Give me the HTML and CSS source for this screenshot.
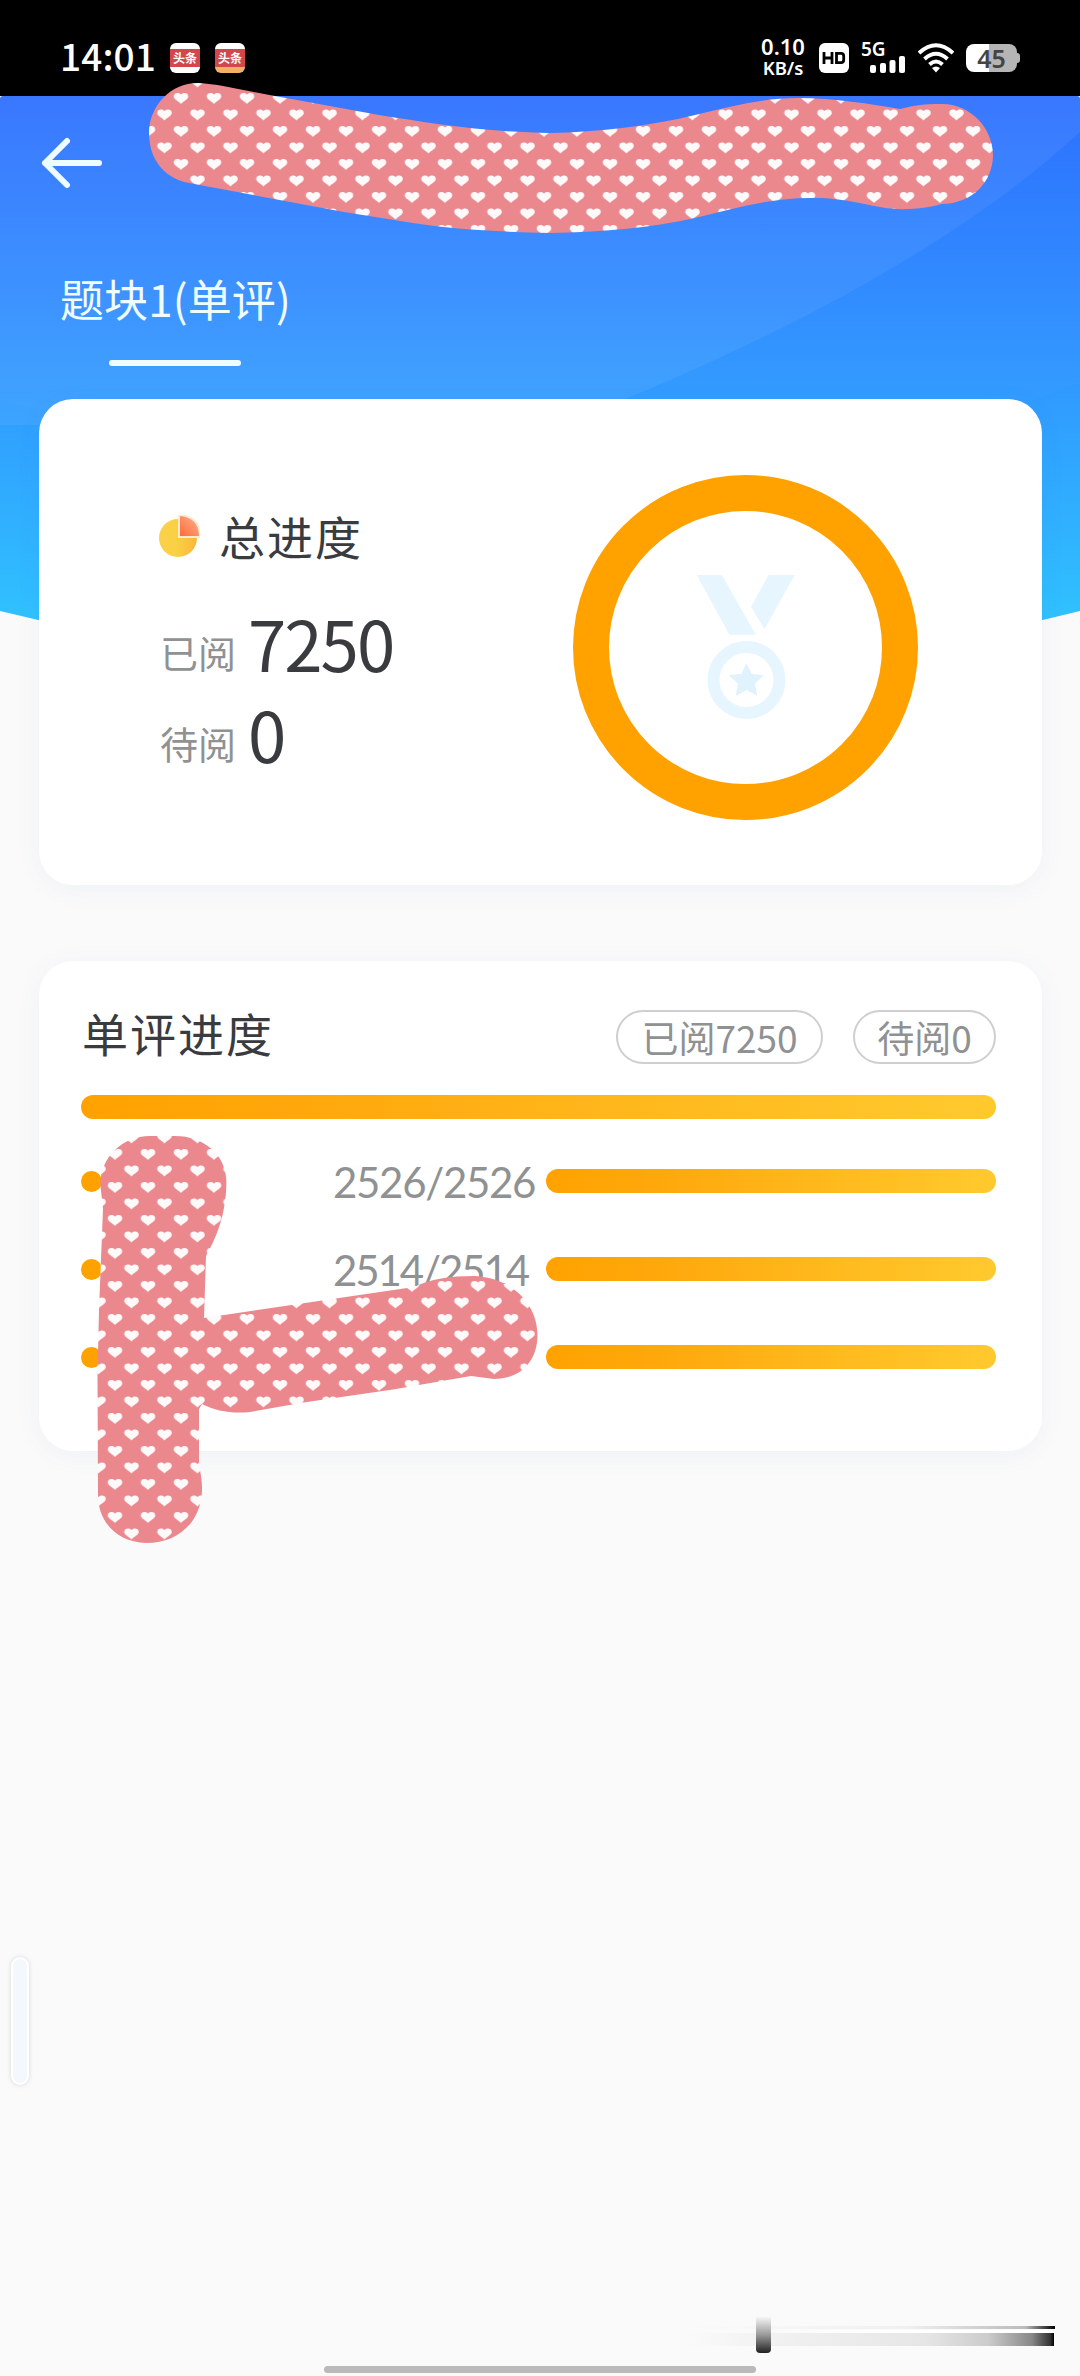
FILE: index.html
```html
<!DOCTYPE html>
<html lang="zh-CN">
<head>
<meta charset="utf-8">
<title>阅卷进度</title>
<link rel="stylesheet" href="styles.css">
</head>
<body>
<div class="page">
  <svg class="backdrop" width="1080" height="560" viewBox="0 96 1080 560" aria-hidden="true">
    <defs>
      <linearGradient id="sky" gradientUnits="userSpaceOnUse" x1="0" y1="96" x2="0" y2="640">
        <stop offset="0" stop-color="#2a6dff"/>
        <stop offset=".53" stop-color="#3099ff"/>
        <stop offset=".95" stop-color="#30c0ff"/>
      </linearGradient>
    </defs>
    <path d="M0 99Q0 96 3 96H1077Q1080 96 1080 99V611Q540 745 0 611Z" fill="url(#sky)"/>
    <path d="M0 96H1080V132Q930 270 647 390L560 425H0Z" fill="#fff" fill-opacity=".06"/>
    <path d="M0 400Q60 412 120 440H900Q1000 415 1080 383V96H0Z" fill="#fff" fill-opacity=".015"/>
  </svg>

  <header class="status">
    <span class="clock">14:01</span>
    <span class="app-icon">头条</span>
    <span class="app-icon lite">头条</span>
    <span class="net"><span class="rate">0.10</span><span class="unit">KB/s</span></span>
    <svg class="hd" width="30" height="30" viewBox="0 0 30 30"><rect width="30" height="30" rx="6" fill="#fff"/><path d="M5 9V21M13 9V21M5 15H13M17.5 10.3H22Q24.7 10.3 24.7 13V17Q24.7 19.7 22 19.7H17.5Z" fill="none" stroke="#000" stroke-width="2.8"/></svg>
    <span class="cell"><span class="gen">5G</span>
      <svg class="bars" width="36" height="17" viewBox="0 0 36 17" fill="#fff"><rect x="0" y="9" width="6" height="8" rx="2"/><rect x="10" y="7" width="6" height="10" rx="2"/><rect x="19.500" y="4" width="6" height="13" rx="2"/><rect x="29" y="0" width="6" height="17" rx="2"/></svg>
    </span>
    <svg class="wifi" width="36" height="30" viewBox="0 0 36 30" fill="none" stroke="#fff" stroke-width="4"><path d="M1 10Q18-5.500 35 10M6.500 16Q18 5.500 29.500 16M11.500 21.500Q18 15.500 24.500 21.500"/><path d="M14 25Q18 22 22 25L18 29.500Z" fill="#fff" stroke="none"/></svg>
    <span class="battery">45</span>
  </header>

  <nav class="nav">
    <svg width="64" height="54" viewBox="0 0 64 54" fill="none" stroke="#effcff" stroke-width="6" stroke-linecap="round" stroke-linejoin="round"><path d="M27 5L5 27L27 49M5 27H59"/></svg>
  </nav>

  <div class="tabs"><span class="tab">题块1(单评)</span></div>

  <main>
    <section class="card total">
      <div class="summary">
        <h2 class="title">
          <svg width="42" height="42" viewBox="0 0 42 42">
            <defs>
              <linearGradient id="pieBase"><stop offset="0" stop-color="#fbd04a"/><stop offset=".45" stop-color="#f9d143"/><stop offset="1" stop-color="#ffb53a"/></linearGradient>
              <linearGradient id="pieSlice" x1="1" y1="0" x2="0" y2="1"><stop offset="0" stop-color="#ffb49a"/><stop offset="1" stop-color="#fb6a33"/></linearGradient>
            </defs>
            <circle cx="20" cy="23" r="19" fill="url(#pieBase)"/>
            <path d="M21 0Q42 1 42 22H21Z" fill="url(#pieSlice)" stroke="#ffe9d0" stroke-width="2"/>
          </svg>
          总进度
        </h2>
        <p class="stat"><span class="label">已阅</span><span class="value">7250</span></p>
        <p class="stat"><span class="label">待阅</span><span class="value">0</span></p>
      </div>
      <svg class="ring" width="345" height="345" viewBox="573 475 345 345">
        <circle cx="745.500" cy="647.500" r="154.500" fill="none" stroke="#ffa200" stroke-width="36"/>
        <g fill="#e7f6fe">
          <path d="M696.700 575H721.800L755.900 634.700H729.400ZM768.600 575H794.800L764.500 629.300L751 606.700Z"/>
          <path d="M746.500 663.300L751.600 673.800L763.800 675.200L755 683.500L757.300 696L746.500 690L735.700 696L738 683.500L728.700 675.200L741.400 673.800Z" fill="#e0f2fd"/>
        </g>
        <circle cx="746.500" cy="680" r="33" fill="none" stroke="#e7f6fe" stroke-width="12"/>
      </svg>
    </section>

    <section class="card single">
      <div class="head">
        <h2 class="heading">单评进度</h2>
        <span class="pill wide">已阅<b>7250</b></span>
        <span class="pill">待阅<b>0</b></span>
      </div>
      <div class="bar"></div>
      <ul class="rows">
        <li class="row"><i class="dot"></i><span class="count">2526/2526</span><div class="bar"></div></li>
        <li class="row"><i class="dot"></i><span class="count narrow">2514/2514</span><div class="bar"></div></li>
        <li class="row"><i class="dot"></i><span class="count tight">2210/2210</span><div class="bar"></div></li>
      </ul>
    </section>
  </main>

  <svg class="tape" width="1080" height="1600" viewBox="0 0 1080 1600" aria-hidden="true">
    <defs>
      <pattern id="hearts" patternUnits="userSpaceOnUse" x="172.750" y="90" width="33" height="33">
        <rect width="33" height="33" fill="#ea888e"/>
        <path id="heart" d="M8.200 4.800C9.500 2.300 15.500 2 15.500 6.500C15.500 9.700 10.500 11 8.200 14C5.900 11 1 9.700 1 6.500C1 2 7 2.300 8.200 4.800Z" fill="#fffafa"/>
        <use href="#heart" x="16.500" y="16.500"/>
      </pattern>
    </defs>
    <g fill="url(#hearts)">
      <path d="M199 83C220 84 250 92 286 98L379 115C430 123 482 132 550 133C600 132 650 126 695 115C735 105 765 98 798 98C835 98 870 104 900 109C915 105 925 104 940 104C970 103 993 128 993 155C993 180 974 204 941 204C925 209 900 211 880 207C850 201 835 198 815 198C775 197 735 208 695 218C650 228 600 232 550 233C500 232 450 229 413 223L344 212L189 183C163 178 149 158 149 133C149 105 172 82 199 83Z"/>
      <path d="M100.400 1185C100 1158 122 1136 150 1136H175C204 1136 226 1155 226.400 1181C226.400 1215 216 1238 206 1256L204 1318L414 1287C430 1279 450 1276 475 1276C510 1278 537 1302 537.500 1335C537.500 1362 520 1379 494 1379L471 1376L393 1389.600L303.600 1402.600L250 1412C232 1414 216 1411 202 1404L199 1409V1466C205 1490 202 1508 191 1523C180 1536 165 1543 146.400 1543C115 1542 98 1520 98 1495L97.500 1375L99 1310L103 1209Z"/>
    </g>
  </svg>

  <div class="side-handle"></div>
  <div class="streak"><i class="hair"></i><i class="band"></i><i class="knob"></i></div>
  <div class="home-bar"></div>
</div>
</body>
</html>
```

FILE: styles.css
```css
* { box-sizing: border-box; }

body {
  margin: 0;
  background: #fafafa;
  color: #393b3f;
  font-family: "Noto Sans CJK SC", sans-serif;
}

h2, p, ul { margin: 0; padding: 0; font-weight: 400; list-style: none; }
svg { display: block; }

.page { position: relative; width: 1080px; height: 2376px; overflow: hidden; background: #fafafa; }
.backdrop { position: absolute; left: 0; top: 96px; }

/* status bar */
.status {
  position: relative;
  display: flex;
  align-items: center;
  height: 96px;
  padding: 20px 63px 0 60px;
  background: #000;
  color: #fff;
}
.clock { width: 110px; font-size: 37px; line-height: 56px; font-weight: 500; letter-spacing: .1px; margin-top: -6px; }
.app-icon {
  width: 30px; height: 30px; margin-right: 15px;
  border-radius: 6px;
  background: linear-gradient(#fff 6px, #d2474b 6px 24px, #fff 24px);
  font-size: 12px; line-height: 29px; font-weight: 700; text-align: center;
}
.app-icon.lite { background: linear-gradient(#fff 6px, #d2474b 6px 24px, #f2b265 24px); }
.net {
  display: flex; flex-direction: column; align-items: center;
  width: 46px; margin-left: auto; margin-right: 13px;
  font-family: "Noto Sans", sans-serif;
  font-weight: 600;
}
.rate { font-size: 22px; line-height: 23px; margin-top: -4px; }
.unit { font-size: 18.5px; line-height: 19px; }
.hd { margin-right: 12px; }
.cell { display: flex; flex-direction: column; width: 45px; height: 30px; margin-right: 12px; }
.gen { font: 600 19px/13px "Noto Sans", sans-serif; }
.bars { margin-left: 9px; }
.wifi { margin-right: 12px; }
.battery {
  position: relative;
  width: 51px; height: 28px; border-radius: 8px;
  background: linear-gradient(90deg, #fff 45%, #b5b5b5 45%);
  color: #444; text-align: center;
  font: 600 25px/28px "Noto Sans", sans-serif;
}
.battery::after {
  content: ""; position: absolute; left: 51px; top: 9px;
  width: 3px; height: 10px; border-radius: 0 3px 3px 0; background: #b5b5b5;
}

/* title and tabs */
.nav { position: relative; height: 172px; padding: 40px 0 0 40px; }
.tabs { position: relative; height: 131px; padding-left: 60px; }
.tab { display: inline-flex; flex-direction: column; color: #effdff; font-size: 44px; line-height: 61px; letter-spacing: .1px; }
.tab::after { content: ""; width: 132px; height: 6px; margin: 31px 0 0 49px; border-radius: 3px; background: #effdff; }

/* cards */
.card {
  position: relative;
  margin: 0 38px 76px 39px;
  background: #fff;
  border-radius: 34px;
  box-shadow: 0 4px 26px rgba(60, 100, 190, .06);
}
.total { display: flex; height: 486px; padding: 76px 0 0 119px; }
.summary { width: 415px; padding-top: 30px; }
.title { display: flex; align-items: center; gap: 19px; height: 60px; margin-bottom: 32px; font-size: 46px; line-height: 60px; letter-spacing: 2px; }
.title svg { margin-top: 1px; }
.stat { display: flex; align-items: flex-start; height: 91px; }
.label { width: 90px; padding: 35px 0 0 2px; font-size: 38px; line-height: 40px; color: #8f9192; }
.value { font-size: 69px; line-height: 91px; letter-spacing: -2px; }

.single { height: 490px; padding: 49px 46px 0 42px; }
.head { display: flex; align-items: flex-start; margin-bottom: 31px; }
.heading { margin-right: auto; padding-left: 1px; font-size: 46px; line-height: 44px; letter-spacing: 2px; }
.pill {
  width: 143px; height: 54px; margin-left: 30px;
  border: 2px solid #cdcfd0; border-radius: 27px;
  font-size: 37px; line-height: 50px; color: #8f9192; text-align: center; white-space: nowrap;
}
.pill.wide { width: 207px; }
.pill b { font-weight: 400; }
.bar { height: 24px; border-radius: 12px; background: linear-gradient(90deg, #ffa200, #ffa80c 25%, #ffca2e); }
.rows { margin-top: 18px; }
.row { display: grid; grid-template-columns: 251px 214px 450px; align-items: center; height: 88px; }
.dot { width: 21px; height: 21px; border-radius: 50%; background: #ffa200; }
.count { font-family: Lato, sans-serif; font-size: 42px; line-height: 60px; letter-spacing: -1.3px; padding: 2px 0 0 1px; color: #8f9192; }
.narrow { letter-spacing: -2.1px; }
.tight { letter-spacing: -2.8px; }

/* decoration lying over the content */
.tape { position: absolute; left: 0; top: 0; }
.side-handle {
  position: absolute; left: 11px; top: 1957px; width: 18px; height: 128px;
  border: 2px solid #fff; border-radius: 9px; background: #f4f7fb;
  box-shadow: 0 0 5px rgba(0, 0, 0, .14);
}
.streak { position: absolute; left: 686px; top: 2316px; width: 369px; height: 38px; }
.streak i { position: absolute; }
.hair { left: 0; top: 10px; width: 369px; height: 3px; background: linear-gradient(90deg, transparent, rgba(0,0,0,.04) 60%, rgba(0,0,0,.25) 92%, #000); }
.hair::after { content: ""; position: absolute; left: 85px; right: 0; top: 4px; height: 3px; background: linear-gradient(90deg, transparent, #fff 40%); }
.band { left: 0; top: 17px; width: 368px; height: 13px; background: linear-gradient(90deg, transparent, #f1f1f1 25%, #e6e6e6 65%, #ccc 82%, #888 94%, #333 99%, #000); }
.knob { left: 70px; top: 1px; width: 15px; height: 36px; border-radius: 0 0 4px 4px; background: linear-gradient(#f5f5f5, #999 50%, #222); }
.home-bar { position: absolute; left: 324px; top: 2366px; width: 432px; height: 7px; border-radius: 4px; background: #bababa; }
```
